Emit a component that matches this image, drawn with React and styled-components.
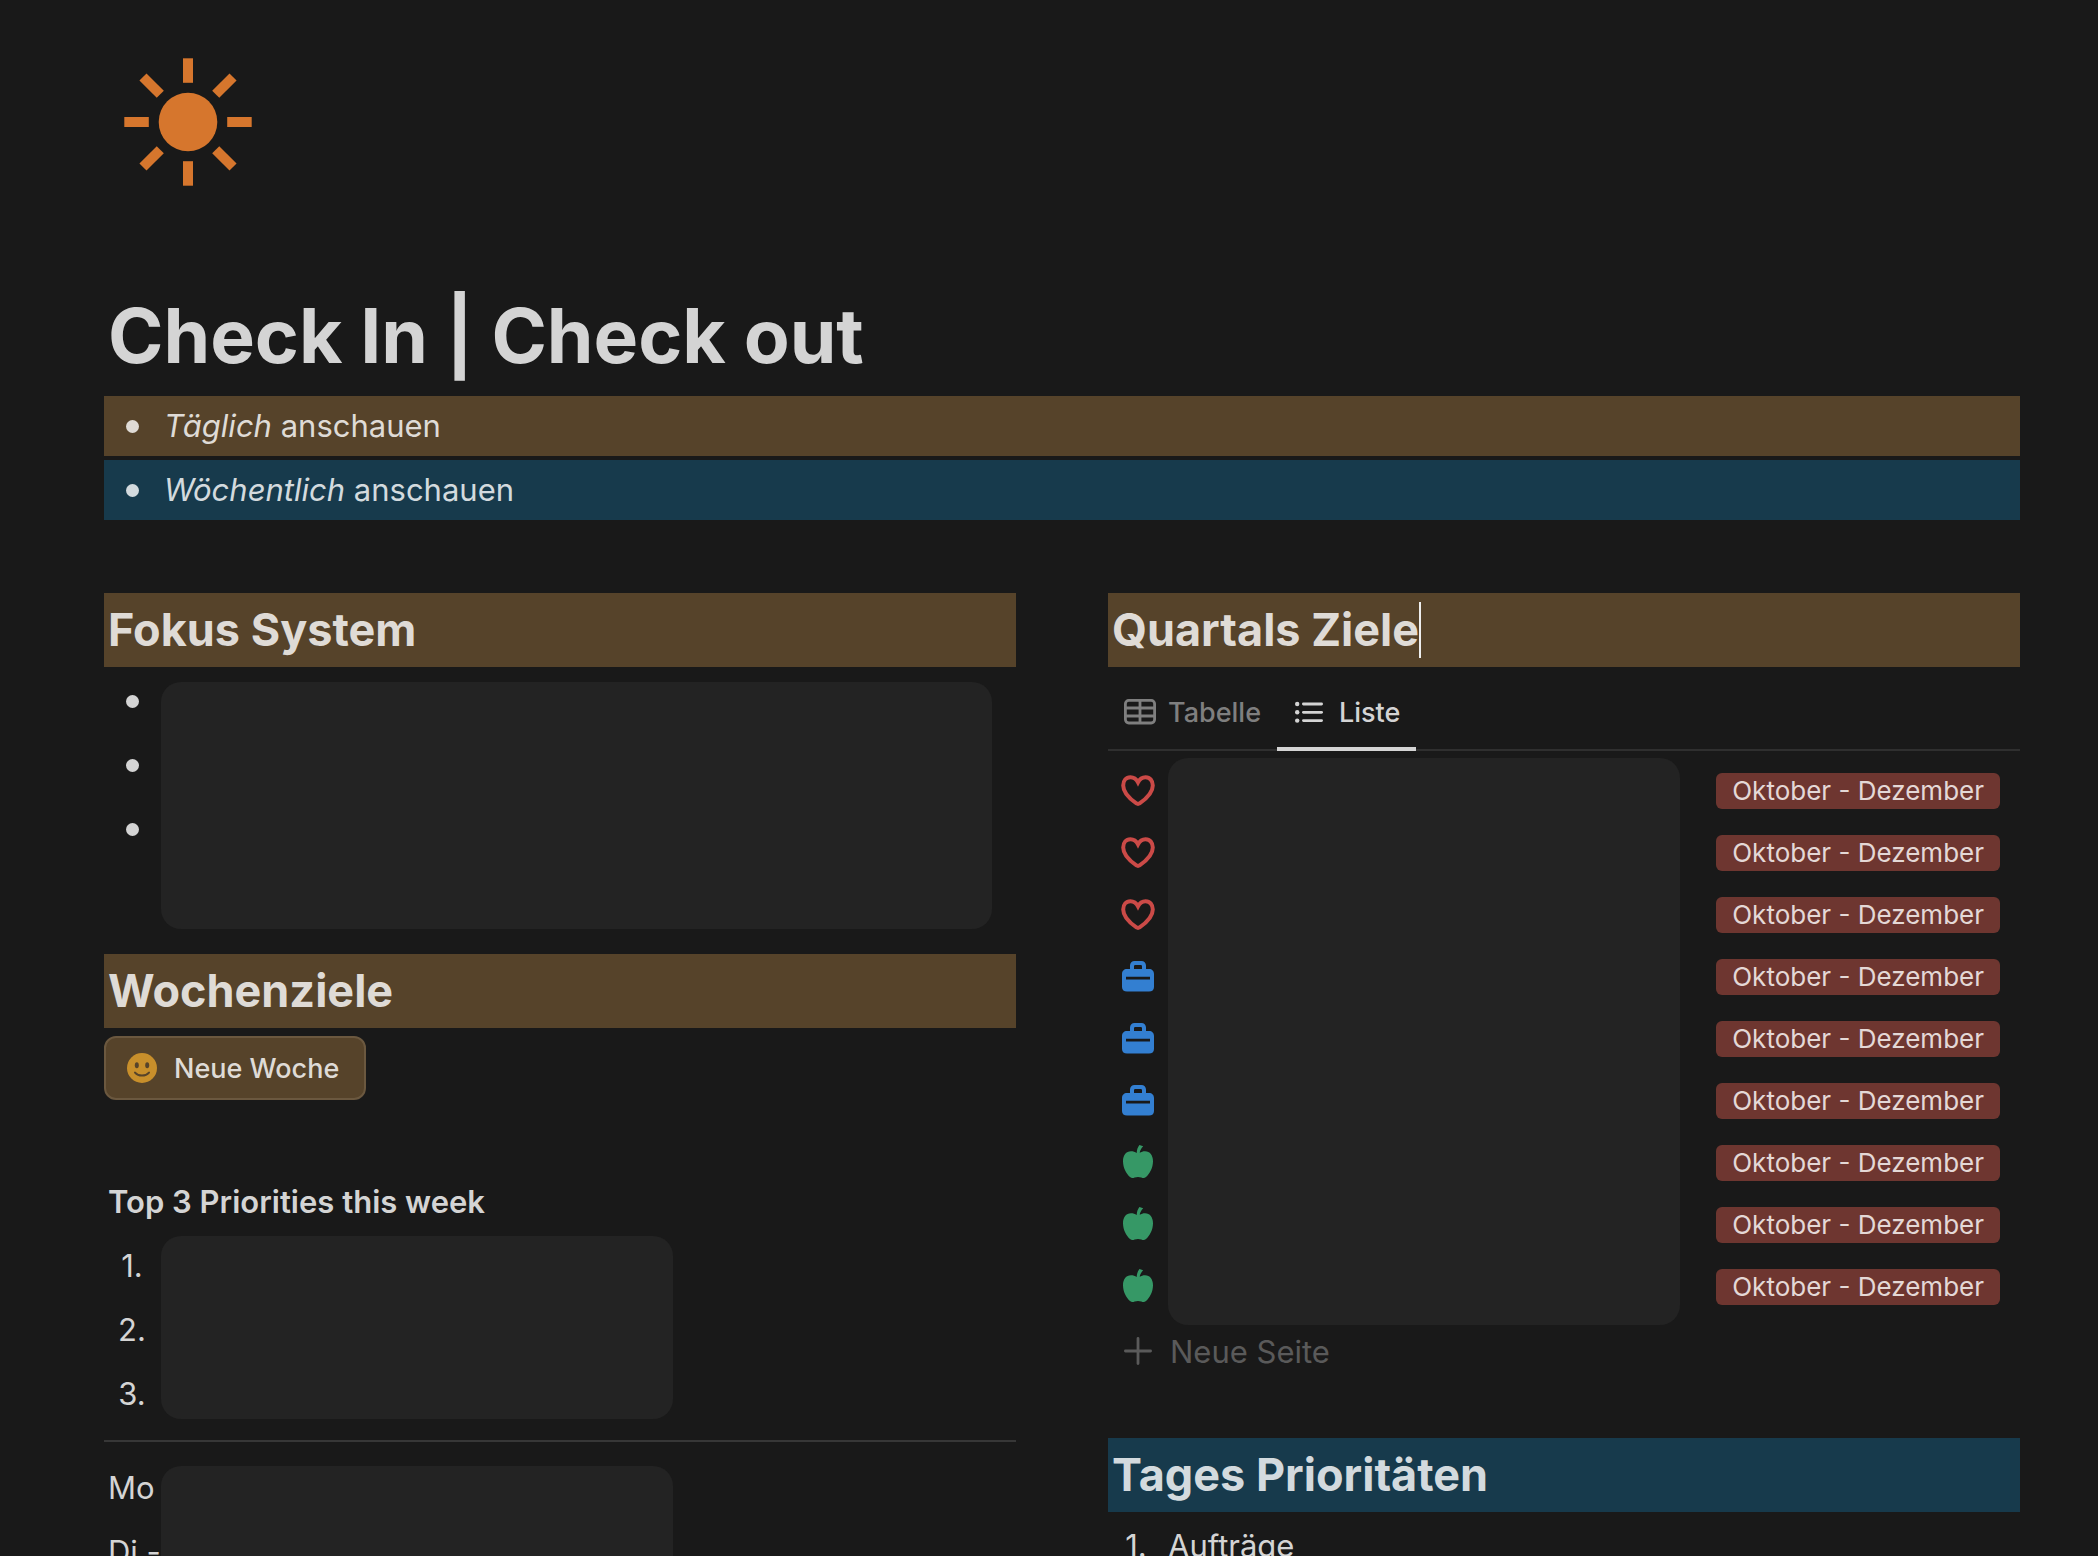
import React from "react";
import styled, { createGlobalStyle } from "styled-components";

const GlobalStyle = createGlobalStyle`
    * {
        box-sizing: border-box;
    }
    body {
        margin: 0;
        background: #191919;
        color: #d4d4d4;
        font-family: Inter, "Liberation Sans", sans-serif;
        font-size: 31px;
        line-height: 60px;
    }
    button {
        font-family: inherit;
        cursor: pointer;
    }
    ul, ol, h1, h2, h3, p {
        margin: 0;
        padding: 0;
        list-style: none;
    }
    svg {
        display: block;
        flex-shrink: 0;
    }
`;

const tones = {
    brown: { background: "#56432a", color: "#dfdbd6" },
    blue: { background: "#173a4c", color: "#d3dade" },
};

const Page = styled.main`
    height: 100vh;
    overflow: hidden;
    padding: 58px 78px 0 104px;
`;

const PageIcon = styled.div`
    padding-left: 20px;
    margin-bottom: 102px;
`;

const Title = styled.h1`
    padding: 0 4px;
    margin-bottom: 12px;
    font-size: 75px;
    font-weight: 700;
    line-height: 96px;
`;

const Legend = styled.ul`
    display: flex;
    flex-direction: column;
    gap: 4px;
`;

const LegendItem = styled.li`
    display: flex;
    align-items: center;
    gap: 4px;
    background: ${({ $tone }) => tones[$tone].background};
    color: ${({ $tone }) => tones[$tone].color};
`;

const Marker = styled.span`
    display: flex;
    align-items: center;
    justify-content: center;
    width: 56px;
    height: 60px;
    flex-shrink: 0;
`;

const Dot = styled.span`
    width: 13px;
    height: 13px;
    border-radius: 50%;
    background: currentColor;
`;

const Columns = styled.div`
    display: grid;
    grid-template-columns: 1fr 1fr;
    column-gap: 92px;
    margin-top: 73px;
`;

const Column = styled.section`
    min-width: 0;
`;

const Heading = styled.h2`
    display: flex;
    align-items: center;
    height: 74px;
    padding: 0 4px;
    font-size: 45px;
    font-weight: 700;
    background: ${({ $tone }) => tones[$tone].background};
    color: ${({ $tone }) => tones[$tone].color};
`;

const Caret = styled.span`
    width: 2px;
    height: 56px;
    background: #eeeeee;
`;

const Block = styled.div`
    display: flex;
    align-items: flex-start;
    margin-top: ${({ $top }) => $top}px;
    margin-bottom: ${({ $bottom }) => $bottom}px;
`;

const MarkerList = styled.ul`
    display: flex;
    flex-direction: column;
    gap: 4px;
    width: 57px;
    flex-shrink: 0;
    white-space: nowrap;
`;

const Panel = styled.div`
    flex: 1;
    max-width: ${({ $wide }) => ($wide ? "none" : "512px")};
    height: ${({ $height }) => $height}px;
    margin-top: ${({ $top }) => $top || 0}px;
    margin-right: ${({ $wide }) => ($wide ? 24 : 0)}px;
    border-radius: 20px;
    background: #232323;
`;

const WeekButton = styled.button`
    display: flex;
    align-items: center;
    gap: 17px;
    height: 64px;
    margin-top: 8px;
    padding: 0 25px 0 21px;
    border: 2px solid #6b583f;
    border-radius: 12px;
    background: #56432a;
    color: #dfdbd6;
    font-size: 27px;
    font-weight: 500;
`;

const SubHeading = styled.h3`
    margin-top: 72px;
    padding: 0 4px;
    font-size: 31px;
    font-weight: 600;
`;

const Divider = styled.hr`
    height: 2px;
    margin: 0;
    border: 0;
    background: #373737;
`;

const Day = styled.li`
    padding-left: 4px;
`;

const Tabs = styled.div`
    display: flex;
    height: 84px;
    border-bottom: 2px solid #2f2f2f;
`;

const Tab = styled.button`
    display: flex;
    align-items: center;
    gap: 12px;
    height: 84px;
    padding: 14px 16px 4px;
    border: 0;
    border-bottom: 4px solid ${({ $active }) => ($active ? "#d4d4d4" : "transparent")};
    background: none;
    color: ${({ $active }) => ($active ? "#d4d4d4" : "#7f7f7f")};
    font-size: 27px;
    font-weight: 500;
`;

const GoalList = styled.ul`
    display: flex;
    flex-direction: column;
    gap: 2px;
    padding-top: 3px;
`;

const GoalIcon = styled.li`
    display: flex;
    align-items: center;
    justify-content: center;
    width: 60px;
    height: 60px;
    color: ${({ $color }) => $color};
`;

const GoalTag = styled.li`
    display: flex;
    align-items: center;
    height: 60px;
`;

const Tag = styled.span`
    padding: 0 16px;
    border-radius: 6px;
    background: #6e3630;
    color: #e4d8d6;
    font-size: 26px;
    line-height: 36px;
    white-space: nowrap;
`;

const Tags = styled(GoalList)`
    margin-left: auto;
    padding-right: 20px;
`;

const NewPage = styled.button`
    display: flex;
    align-items: center;
    gap: 18px;
    height: 52px;
    margin-bottom: 61px;
    padding: 0 16px;
    border: 0;
    background: none;
    color: #5a5a5a;
    font-size: 31px;
`;

const Numbered = styled.li`
    display: flex;
    align-items: center;
    gap: 4px;
`;

const NumberedList = styled.ol`
    margin-top: 4px;
`;

const SunIcon = () => (
    <svg width="128" height="128" viewBox="0 0 128 128" fill="#d6762d">
        <circle cx="64" cy="64" r="29.3" />
        {[0, 45, 90, 135, 180, 225, 270, 315].map((angle) => (
            <rect key={angle} x="59" y="0.3" width="10" height="24.5" transform={`rotate(${angle} 64 64)`} />
        ))}
    </svg>
);

const SmileIcon = () => (
    <svg width="30" height="30" viewBox="0 0 30 30">
        <circle cx="15" cy="15" r="15" fill="#c88f2b" />
        <ellipse cx="9.8" cy="12.2" rx="2" ry="3" fill="#56432a" />
        <ellipse cx="20.2" cy="12.2" rx="2" ry="3" fill="#56432a" />
        <path d="M8 19.6C11.5 23.6 18.5 23.6 22 19.6" fill="none" stroke="#56432a" strokeWidth="2" strokeLinecap="round" />
    </svg>
);

const TableIcon = () => (
    <svg width="32" height="26" viewBox="0 0 32 26" fill="none" stroke="currentColor" strokeWidth="2.8">
        <rect x="1.4" y="1.4" width="29.2" height="22.6" rx="3.4" />
        <path d="M1 9H31M1 17H31M16 1V24" />
    </svg>
);

const ListIcon = () => (
    <svg width="34" height="24" viewBox="0 0 34 24" fill="currentColor">
        {[4, 12.3, 20.6].map((y) => (
            <g key={y}>
                <circle cx="4.2" cy={y} r="2.2" />
                <rect x="9" y={y - 1.4} width="21" height="2.8" rx="1.4" />
            </g>
        ))}
    </svg>
);

const HeartIcon = () => (
    <svg width="34" height="32" viewBox="0 0 34 32" fill="none" stroke="currentColor" strokeWidth="4">
        <path d="M17 7.4C15.4 4.2 12.6 2.3 9.4 2.3C5 2.3 2.2 5.6 2.2 10.6C2.2 17.2 7.4 23 15.4 28.4Q17 29.4 18.6 28.4C26.6 23 31.8 17.2 31.8 10.6C31.8 5.6 29 2.3 24.6 2.3C21.4 2.3 18.6 4.2 17 7.4Z" />
    </svg>
);

const CaseIcon = () => (
    <svg width="32" height="32" viewBox="0 0 32 32" fill="currentColor">
        <path
            fillRule="evenodd"
            d="M8 8V4.5C8 2 10 0 12.5 0H19.5C22 0 24 2 24 4.5V8H27C30 8 32 10 32 13V26C32 29 30 30.6 27 30.6H5C2 30.6 0 29 0 26V13C0 10 2 8 5 8ZM12 8H20V5.2Q20 4 18.8 4H13.2Q12 4 12 5.2ZM4 15.7V18.6H28V15.7Z"
        />
    </svg>
);

const AppleIcon = () => (
    <svg width="30" height="36" viewBox="0 0 30 36" fill="currentColor">
        <path d="M13.7 8C13.8 4.8 14.8 2.2 16.4 0L20.2 1.3C18.2 3.4 17.1 5.4 16.7 7.8C18.3 6.7 20 6.2 22 6.2C27 6.2 30 10.2 30 16.2C30 22.4 26.8 28.8 23 32C21.6 33.1 20 33.2 18.4 32.4C16 31.7 14 31.7 11.6 32.4C10 33.2 8.4 33.1 7 32C3.2 28.8 0 22.4 0 16.2C0 10.2 3 6.2 8 6.2C10.2 6.2 12 6.8 13.7 8Z" />
    </svg>
);

const PlusIcon = () => (
    <svg width="28" height="28" viewBox="0 0 28 28" stroke="currentColor" strokeWidth="2.8" strokeLinecap="round">
        <path d="M14 1.4V26.6M1.4 14H26.6" />
    </svg>
);

const goalKinds = {
    heart: { Icon: HeartIcon, color: "#cb4a47" },
    work: { Icon: CaseIcon, color: "#337fd1" },
    health: { Icon: AppleIcon, color: "#369866" },
};

const goals = ["heart", "heart", "heart", "work", "work", "work", "health", "health", "health"];

const App = () => {
    return (
        <>
            <GlobalStyle />
            <Page>
                <PageIcon>
                    <SunIcon />
                </PageIcon>
                <Title>Check In | Check out</Title>
                <Legend>
                    <LegendItem $tone="brown">
                        <Marker><Dot /></Marker>
                        <span><em>Täglich</em> anschauen</span>
                    </LegendItem>
                    <LegendItem $tone="blue">
                        <Marker><Dot /></Marker>
                        <span><em>Wöchentlich</em> anschauen</span>
                    </LegendItem>
                </Legend>

                <Columns>
                    <Column>
                        <Heading $tone="brown">Fokus System</Heading>
                        <Block $top={4} $bottom={25}>
                            <MarkerList>
                                {[1, 2, 3].map((n) => (
                                    <li key={n}><Marker><Dot /></Marker></li>
                                ))}
                            </MarkerList>
                            <Panel $wide $top={11} $height={247} />
                        </Block>

                        <Heading $tone="brown">Wochenziele</Heading>
                        <WeekButton type="button">
                            <SmileIcon />
                            Neue Woche
                        </WeekButton>

                        <SubHeading>Top 3 Priorities this week</SubHeading>
                        <Block $top={4} $bottom={16}>
                            <MarkerList as="ol">
                                {[1, 2, 3].map((n) => (
                                    <li key={n}><Marker>{n}.</Marker></li>
                                ))}
                            </MarkerList>
                            <Panel $height={183} />
                        </Block>
                        <Divider />
                        <Block $top={16} $bottom={0}>
                            <MarkerList>
                                <Day>Mo</Day>
                                <Day>Di -</Day>
                            </MarkerList>
                            <Panel $top={8} $height={183} />
                        </Block>
                    </Column>

                    <Column>
                        <Heading $tone="brown">
                            Quartals Ziele
                            <Caret />
                        </Heading>
                        <Tabs role="tablist">
                            <Tab type="button" role="tab" aria-selected="false">
                                <TableIcon />
                                Tabelle
                            </Tab>
                            <Tab type="button" role="tab" aria-selected="true" $active>
                                <ListIcon />
                                Liste
                            </Tab>
                        </Tabs>
                        <Block $top={7} $bottom={0}>
                            <GoalList>
                                {goals.map((kind, i) => {
                                    const { Icon, color } = goalKinds[kind];
                                    return (
                                        <GoalIcon key={i} $color={color}>
                                            <Icon />
                                        </GoalIcon>
                                    );
                                })}
                            </GoalList>
                            <Panel $height={567} />
                            <Tags>
                                {goals.map((kind, i) => (
                                    <GoalTag key={i}>
                                        <Tag>Oktober - Dezember</Tag>
                                    </GoalTag>
                                ))}
                            </Tags>
                        </Block>
                        <NewPage type="button">
                            <PlusIcon />
                            Neue Seite
                        </NewPage>

                        <Heading $tone="blue">Tages Prioritäten</Heading>
                        <NumberedList>
                            <Numbered>
                                <Marker>1.</Marker>
                                Aufträge
                            </Numbered>
                        </NumberedList>
                    </Column>
                </Columns>
            </Page>
        </>
    );
};

export default App;
